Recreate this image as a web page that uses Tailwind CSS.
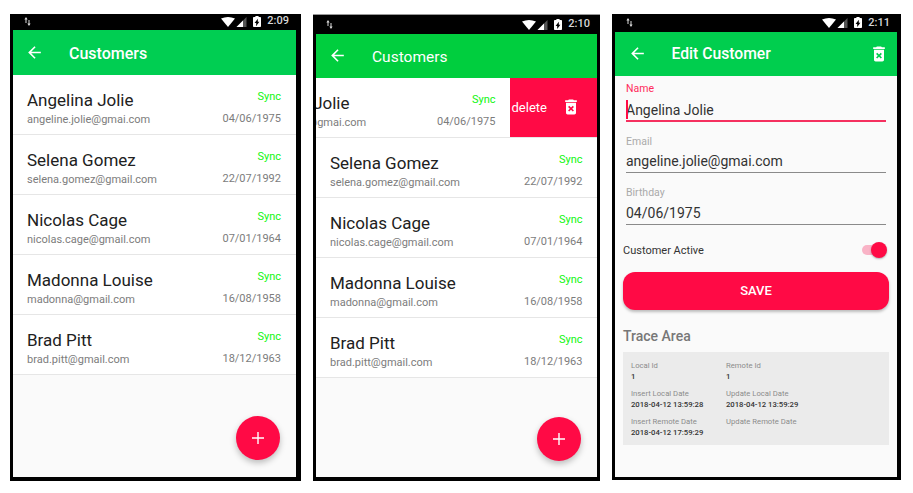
<!DOCTYPE html>
<html lang="en">
<head>
<meta charset="UTF-8">
<title>Customers</title>
<script src="https://cdn.jsdelivr.net/npm/@tailwindcss/browser@4"></script>
</head>
<body class="bg-white font-['Roboto',sans-serif] w-[913px] h-[493px] overflow-hidden">
<div class="flex items-start pt-[14px] pl-[10px]">

  <!-- Phone 1: list -->
  <div class="w-[291px] h-[467px] bg-black pl-[2.5px] pr-[5px] pb-[4px] flex flex-col">
    <div class="h-[16px] flex items-center justify-between pl-[11px] pr-[7px] pb-[1px] text-[#d8d8d8] shrink-0">
      <svg class="w-[7px] h-[9px]" viewBox="0 0 7 9" fill="#ddd"><path d="M2 0 L3.6 2.4 H2.5 V6 H1.5 V2.4 H.4Z M5 9 L3.4 6.6 H4.5 V3 H5.5 V6.6 H6.6Z"/></svg>
      <div class="flex items-center">
        <svg class="w-[14px] h-[10px]" viewBox="0 0 14 10" fill="#fff"><path d="M0 1.5 Q7 -1.5 14 1.5 L7 10Z"/></svg>
        <svg class="w-[11px] h-[10px] ml-[1px]" viewBox="0 0 10 10"><path d="M10 0V10H0Z" fill="#555"/><path d="M6.5 3.5V10H0Z" fill="#fff"/></svg>
        <svg class="w-[8px] h-[11px] ml-[6px]" viewBox="7 2 10 20" preserveAspectRatio="none" fill="#fff"><path d="M15.67 4H14V2h-4v2H8.33C7.6 4 7 4.6 7 5.33v15.33C7 21.4 7.6 22 8.33 22h7.33c.74 0 1.34-.6 1.34-1.33V5.33C17 4.6 16.4 4 15.67 4zM11 20v-5.5H9L13 7v5.5h2L11 20z"/></svg>
        <span class="text-[11px] font-medium ml-[6px]">2:09</span>
      </div>
    </div>
    <div class="flex-1 bg-[#fafafa] flex flex-col relative min-h-0">
      <div class="h-[44.5px] bg-[#00ce52] flex items-center text-white shrink-0">
        <svg class="w-[19px] h-[19px] ml-[12.5px]" viewBox="0 0 24 24" fill="#fff"><path d="M20 11H7.83l5.59-5.59L12 4l-8 8 8 8 1.41-1.41L7.83 13H20v-2z"/></svg>
        <span class="text-[16px] font-medium ml-[25px] mt-[3px]">Customers</span>
      </div>
      <div class="h-[60px] bg-white border-b border-[#e6e6e6] flex justify-between pl-[14.5px] pr-[15px] shrink-0">
        <div class="pt-[13.5px]"><div class="text-[17px] leading-[24px] text-[#212121]">Angelina Jolie</div><div class="text-[11px] leading-[14px] mt-[1px] text-[#7c7c7c]">angeline.jolie@gmai.com</div></div>
        <div class="text-right pt-[15px]"><div class="text-[11px] leading-[14px] text-[#10f510]">Sync</div><div class="text-[11px] leading-[14px] mt-[8px] text-[#7c7c7c]">04/06/1975</div></div>
      </div>
      <div class="h-[60px] bg-white border-b border-[#e6e6e6] flex justify-between pl-[14.5px] pr-[15px] shrink-0">
        <div class="pt-[13.5px]"><div class="text-[17px] leading-[24px] text-[#212121]">Selena Gomez</div><div class="text-[11px] leading-[14px] mt-[1px] text-[#7c7c7c]">selena.gomez@gmail.com</div></div>
        <div class="text-right pt-[15px]"><div class="text-[11px] leading-[14px] text-[#10f510]">Sync</div><div class="text-[11px] leading-[14px] mt-[8px] text-[#7c7c7c]">22/07/1992</div></div>
      </div>
      <div class="h-[60px] bg-white border-b border-[#e6e6e6] flex justify-between pl-[14.5px] pr-[15px] shrink-0">
        <div class="pt-[13.5px]"><div class="text-[17px] leading-[24px] text-[#212121]">Nicolas Cage</div><div class="text-[11px] leading-[14px] mt-[1px] text-[#7c7c7c]">nicolas.cage@gmail.com</div></div>
        <div class="text-right pt-[15px]"><div class="text-[11px] leading-[14px] text-[#10f510]">Sync</div><div class="text-[11px] leading-[14px] mt-[8px] text-[#7c7c7c]">07/01/1964</div></div>
      </div>
      <div class="h-[60px] bg-white border-b border-[#e6e6e6] flex justify-between pl-[14.5px] pr-[15px] shrink-0">
        <div class="pt-[13.5px]"><div class="text-[17px] leading-[24px] text-[#212121]">Madonna Louise</div><div class="text-[11px] leading-[14px] mt-[1px] text-[#7c7c7c]">madonna@gmail.com</div></div>
        <div class="text-right pt-[15px]"><div class="text-[11px] leading-[14px] text-[#10f510]">Sync</div><div class="text-[11px] leading-[14px] mt-[8px] text-[#7c7c7c]">16/08/1958</div></div>
      </div>
      <div class="h-[60px] bg-white border-b border-[#e6e6e6] flex justify-between pl-[14.5px] pr-[15px] shrink-0">
        <div class="pt-[13.5px]"><div class="text-[17px] leading-[24px] text-[#212121]">Brad Pitt</div><div class="text-[11px] leading-[14px] mt-[1px] text-[#7c7c7c]">brad.pitt@gmail.com</div></div>
        <div class="text-right pt-[15px]"><div class="text-[11px] leading-[14px] text-[#10f510]">Sync</div><div class="text-[11px] leading-[14px] mt-[8px] text-[#7c7c7c]">18/12/1963</div></div>
      </div>
      <div class="absolute right-[16px] bottom-[17px] w-[44px] h-[44px] rounded-full bg-[#ff0a45] shadow-[0_3px_6px_rgba(0,0,0,0.25)] flex items-center justify-center">
        <svg class="w-[12px] h-[12px]" viewBox="0 0 12 12" fill="#fff"><path d="M5.3 0h1.4v5.3H12v1.4H6.7V12H5.3V6.7H0V5.3h5.3z"/></svg>
      </div>
    </div>
  </div>

  <!-- Phone 2: swiped row -->
  <div class="w-[287px] h-[467px] ml-[12px] bg-black pl-[2.5px] pr-[3.5px] pb-[4px] border-t border-[#999] flex flex-col">
    <div class="h-[19px] flex items-center justify-between pl-[10.5px] pr-[6.5px] text-[#d8d8d8] shrink-0">
      <svg class="w-[7px] h-[9px]" viewBox="0 0 7 9" fill="#ddd"><path d="M2 0 L3.6 2.4 H2.5 V6 H1.5 V2.4 H.4Z M5 9 L3.4 6.6 H4.5 V3 H5.5 V6.6 H6.6Z"/></svg>
      <div class="flex items-center">
        <svg class="w-[14px] h-[10px]" viewBox="0 0 14 10" fill="#fff"><path d="M0 1.5 Q7 -1.5 14 1.5 L7 10Z"/></svg>
        <svg class="w-[11px] h-[10px] ml-[1px]" viewBox="0 0 10 10"><path d="M10 0V10H0Z" fill="#555"/><path d="M6.5 3.5V10H0Z" fill="#fff"/></svg>
        <svg class="w-[8px] h-[11px] ml-[6px]" viewBox="7 2 10 20" preserveAspectRatio="none" fill="#fff"><path d="M15.67 4H14V2h-4v2H8.33C7.6 4 7 4.6 7 5.33v15.33C7 21.4 7.6 22 8.33 22h7.33c.74 0 1.34-.6 1.34-1.33V5.33C17 4.6 16.4 4 15.67 4zM11 20v-5.5H9L13 7v5.5h2L11 20z"/></svg>
        <span class="text-[11px] font-medium ml-[6px]">2:10</span>
      </div>
    </div>
    <div class="flex-1 bg-[#fafafa] flex flex-col relative min-h-0">
      <div class="h-[43.5px] bg-[#00ce3e] flex items-center text-white shrink-0">
        <svg class="w-[19px] h-[19px] ml-[12.5px]" viewBox="0 0 24 24" fill="#fff"><path d="M20 11H7.83l5.59-5.59L12 4l-8 8 8 8 1.41-1.41L7.83 13H20v-2z"/></svg>
        <span class="text-[15.5px] ml-[25px] mt-[3px]">Customers</span>
      </div>
      <div class="h-[60px] bg-white border-b border-[#e6e6e6] flex overflow-hidden shrink-0">
        <div class="w-full shrink-0 ml-[-87px] flex justify-between pl-[14.5px] pr-[14px]">
          <div class="pt-[13.5px]"><div class="text-[17px] leading-[24px] text-[#212121] whitespace-nowrap">Angelina Jolie</div><div class="text-[11px] leading-[14px] mt-[1px] text-[#7c7c7c] whitespace-nowrap">angeline.jolie@gmai.com</div></div>
          <div class="text-right pt-[15px]"><div class="text-[11px] leading-[14px] text-[#10f510]">Sync</div><div class="text-[11px] leading-[14px] mt-[8px] text-[#7c7c7c]">04/06/1975</div></div>
        </div>
        <div class="w-[87px] shrink-0 bg-[#ff0a45] flex items-center text-white pl-[2px] pb-[1px]">
          <span class="text-[13px] leading-none mt-[2px]">delete</span>
          <svg class="w-[20px] h-[20px] ml-[14px]" viewBox="0 0 24 24" fill="#fff"><path d="M6 19c0 1.1.9 2 2 2h8c1.1 0 2-.9 2-2V7H6v12zm2.46-7.12l1.41-1.41L12 12.59l2.12-2.12 1.41 1.41L13.41 14l2.12 2.12-1.41 1.41L12 15.41l-2.12 2.12-1.41-1.41L10.59 14l-2.13-2.12zM15.5 4l-1-1h-5l-1 1H5v2h14V4z"/></svg>
        </div>
      </div>
      <div class="h-[60px] bg-white border-b border-[#e6e6e6] flex justify-between pl-[14.5px] pr-[14px] shrink-0">
        <div class="pt-[13.5px]"><div class="text-[17px] leading-[24px] text-[#212121]">Selena Gomez</div><div class="text-[11px] leading-[14px] mt-[1px] text-[#7c7c7c]">selena.gomez@gmail.com</div></div>
        <div class="text-right pt-[15px]"><div class="text-[11px] leading-[14px] text-[#10f510]">Sync</div><div class="text-[11px] leading-[14px] mt-[8px] text-[#7c7c7c]">22/07/1992</div></div>
      </div>
      <div class="h-[60px] bg-white border-b border-[#e6e6e6] flex justify-between pl-[14.5px] pr-[14px] shrink-0">
        <div class="pt-[13.5px]"><div class="text-[17px] leading-[24px] text-[#212121]">Nicolas Cage</div><div class="text-[11px] leading-[14px] mt-[1px] text-[#7c7c7c]">nicolas.cage@gmail.com</div></div>
        <div class="text-right pt-[15px]"><div class="text-[11px] leading-[14px] text-[#10f510]">Sync</div><div class="text-[11px] leading-[14px] mt-[8px] text-[#7c7c7c]">07/01/1964</div></div>
      </div>
      <div class="h-[60px] bg-white border-b border-[#e6e6e6] flex justify-between pl-[14.5px] pr-[14px] shrink-0">
        <div class="pt-[13.5px]"><div class="text-[17px] leading-[24px] text-[#212121]">Madonna Louise</div><div class="text-[11px] leading-[14px] mt-[1px] text-[#7c7c7c]">madonna@gmail.com</div></div>
        <div class="text-right pt-[15px]"><div class="text-[11px] leading-[14px] text-[#10f510]">Sync</div><div class="text-[11px] leading-[14px] mt-[8px] text-[#7c7c7c]">16/08/1958</div></div>
      </div>
      <div class="h-[60px] bg-white border-b border-[#e6e6e6] flex justify-between pl-[14.5px] pr-[14px] shrink-0">
        <div class="pt-[13.5px]"><div class="text-[17px] leading-[24px] text-[#212121]">Brad Pitt</div><div class="text-[11px] leading-[14px] mt-[1px] text-[#7c7c7c]">brad.pitt@gmail.com</div></div>
        <div class="text-right pt-[15px]"><div class="text-[11px] leading-[14px] text-[#10f510]">Sync</div><div class="text-[11px] leading-[14px] mt-[8px] text-[#7c7c7c]">18/12/1963</div></div>
      </div>
      <div class="absolute right-[16px] bottom-[16px] w-[44px] h-[44px] rounded-full bg-[#ff0a45] shadow-[0_3px_6px_rgba(0,0,0,0.25)] flex items-center justify-center">
        <svg class="w-[12px] h-[12px]" viewBox="0 0 12 12" fill="#fff"><path d="M5.3 0h1.4v5.3H12v1.4H6.7V12H5.3V6.7H0V5.3h5.3z"/></svg>
      </div>
    </div>
  </div>

  <!-- Phone 3: edit form -->
  <div class="w-[289px] h-[466px] ml-[12px] bg-black pl-[3px] pr-[4px] pb-[3.5px] flex flex-col">
    <div class="h-[17.5px] flex items-center justify-between pl-[11px] pr-[7px] text-[#d8d8d8] shrink-0">
      <svg class="w-[7px] h-[9px]" viewBox="0 0 7 9" fill="#ddd"><path d="M2 0 L3.6 2.4 H2.5 V6 H1.5 V2.4 H.4Z M5 9 L3.4 6.6 H4.5 V3 H5.5 V6.6 H6.6Z"/></svg>
      <div class="flex items-center">
        <svg class="w-[14px] h-[10px]" viewBox="0 0 14 10" fill="#fff"><path d="M0 1.5 Q7 -1.5 14 1.5 L7 10Z"/></svg>
        <svg class="w-[11px] h-[10px] ml-[1px]" viewBox="0 0 10 10"><path d="M10 0V10H0Z" fill="#555"/><path d="M6.5 3.5V10H0Z" fill="#fff"/></svg>
        <svg class="w-[8px] h-[11px] ml-[6px]" viewBox="7 2 10 20" preserveAspectRatio="none" fill="#fff"><path d="M15.67 4H14V2h-4v2H8.33C7.6 4 7 4.6 7 5.33v15.33C7 21.4 7.6 22 8.33 22h7.33c.74 0 1.34-.6 1.34-1.33V5.33C17 4.6 16.4 4 15.67 4zM11 20v-5.5H9L13 7v5.5h2L11 20z"/></svg>
        <span class="text-[11px] font-medium ml-[6px]">2:11</span>
      </div>
    </div>
    <div class="flex-1 bg-[#fafafa] flex flex-col min-h-0">
      <div class="h-[44px] bg-[#00ce4e] flex items-center text-white shrink-0">
        <svg class="w-[19px] h-[19px] ml-[12.5px]" viewBox="0 0 24 24" fill="#fff"><path d="M20 11H7.83l5.59-5.59L12 4l-8 8 8 8 1.41-1.41L7.83 13H20v-2z"/></svg>
        <span class="text-[15.7px] font-medium ml-[25px] mt-[1px]">Edit Customer</span>
        <svg class="w-[20px] h-[20px] ml-auto mr-[8px]" viewBox="0 0 24 24" fill="#fff"><path d="M6 19c0 1.1.9 2 2 2h8c1.1 0 2-.9 2-2V7H6v12zm2.46-7.12l1.41-1.41L12 12.59l2.12-2.12 1.41 1.41L13.41 14l2.12 2.12-1.41 1.41L12 15.41l-2.12 2.12-1.41-1.41L10.59 14l-2.13-2.12zM15.5 4l-1-1h-5l-1 1H5v2h14V4z"/></svg>
      </div>
      <div class="pl-[11px] pr-[11px] pt-[6px] flex flex-col h-full">
        <div class="text-[10.5px] leading-[13px] text-[#ff2a5a]">Name</div>
        <div class="text-[14px] leading-[20px] text-[#333] mt-[5.5px] border-b-2 border-[#f5305f] h-[22px] relative shrink-0">
          <span class="absolute left-0 top-0 w-[1.5px] h-[19px] bg-[#ff0a45]"></span>Angelina Jolie
        </div>
        <div class="text-[10.5px] leading-[13px] text-[#aaa] mt-[12.5px]">Email</div>
        <div class="text-[14px] leading-[20px] text-[#333] mt-[3.5px] border-b border-[#8a8a8a] h-[22px] shrink-0">angeline.jolie@gmai.com</div>
        <div class="text-[10.5px] leading-[13px] text-[#aaa] mt-[12.5px]">Birthday</div>
        <div class="text-[14px] leading-[20px] text-[#333] mt-[4.5px] border-b border-[#8a8a8a] h-[22px] shrink-0">04/06/1975</div>

        <div class="flex items-center justify-between -ml-[3px] -mr-[1px] mt-[15px] h-[20px] shrink-0">
          <span class="text-[11px] text-[#333] mt-[2px]">Customer Active</span>
          <div class="relative w-[25px] h-[16px] flex items-center">
            <div class="w-[22px] h-[10px] rounded-full bg-[#f9b3c6]"></div>
            <div class="absolute right-0 top-0 w-[16px] h-[16px] rounded-full bg-[#ff0a45] shadow-[0_1px_2px_rgba(0,0,0,0.3)]"></div>
          </div>
        </div>
        <div class="-ml-[3px] -mr-[3px] mt-[12px] h-[38px] rounded-[12px] bg-[#ff0a45] shadow-[0_2px_3px_rgba(0,0,0,0.25)] flex items-center justify-center text-white text-[13px] font-medium shrink-0">SAVE</div>
        <div class="-ml-[3px] mt-[18px] text-[14px] leading-[17px] font-medium text-[#777]">Trace Area</div>
        <div class="-ml-[3px] -mr-[3px] mt-[6.5px] bg-[#ebebeb] h-[93px] px-[8px] pt-[8px] grid grid-cols-[95px_1fr] content-start gap-y-[6px] text-[7.7px] leading-[11px] shrink-0">
          <div><div class="text-[#8c8c8c]">Local Id</div><div class="text-[#333] font-medium">1</div></div>
          <div><div class="text-[#8c8c8c]">Remote Id</div><div class="text-[#333] font-medium">1</div></div>
          <div><div class="text-[#8c8c8c]">Insert Local Date</div><div class="text-[#333] font-medium">2018-04-12 13:59:28</div></div>
          <div><div class="text-[#8c8c8c]">Update Local Date</div><div class="text-[#333] font-medium">2018-04-12 13:59:29</div></div>
          <div><div class="text-[#8c8c8c]">Insert Remote Date</div><div class="text-[#333] font-medium">2018-04-12 17:59:29</div></div>
          <div><div class="text-[#8c8c8c]">Update Remote Date</div></div>
        </div>
      </div>
    </div>
  </div>

</div>
</body>
</html>
